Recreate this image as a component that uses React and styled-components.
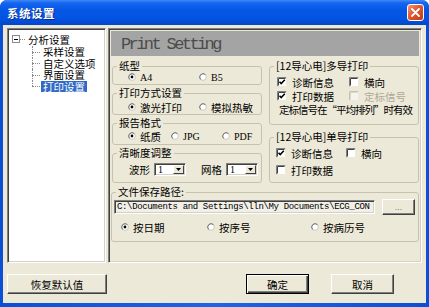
import React from 'react';
import styled, { createGlobalStyle } from 'styled-components';

const GlobalStyle = createGlobalStyle`
  html, body {
    margin: 0;
    padding: 0;
  }
  body {
    width: 429px;
    height: 307px;
    overflow: hidden;
    font-family: "Noto Sans CJK SC", "Liberation Sans", sans-serif;
    font-size: 10.5px;
    color: #000;
  }
`;

const Window = styled.div`
  width: 429px;
  height: 307px;
  display: flex;
  flex-direction: column;
  background: linear-gradient(to right, #0a4fd6, #1f63e6 50%, #0a4fd6);
  border-radius: 7px 7px 0 0;
  overflow: hidden;
`;

const TitleBar = styled.div`
  height: 25px;
  flex: none;
  display: flex;
  align-items: center;
  justify-content: space-between;
  padding: 0 5px 0 7px;
  background: linear-gradient(to bottom, #3d8af7 0%, #1665ef 12%, #0457e6 40%, #0453e2 75%, #0346c8 100%);
`;

const Title = styled.span`
  color: #fff;
  font-weight: bold;
  font-size: 11.5px;
  letter-spacing: 0.5px;
  text-shadow: 1px 1px 0 #0a2a8a;
`;

const CloseButton = styled.div`
  width: 17px;
  height: 17px;
  box-sizing: border-box;
  border: 1px solid #fff;
  border-radius: 3px;
  background: linear-gradient(135deg, #f0987a 0%, #e0582e 45%, #c23d14 100%);
  display: flex;
  align-items: center;
  justify-content: center;
`;

const Body = styled.div`
  flex: 1;
  margin: 0 3px 4px;
  padding: 3px 4px 0;
  background: #ece9d8;
  display: flex;
  flex-direction: column;
`;

const Main = styled.div`
  height: 235px;
  display: flex;
  gap: 2px;
`;

const Sunken = styled.div`
  box-sizing: border-box;
  border: 1px solid;
  border-color: #808080 #fff #fff #808080;
  box-shadow: inset 1px 1px 0 #404040, inset -1px -1px 0 #d4d0c8;
`;

const Tree = styled(Sunken)`
  width: 99px;
  background: #fff;
  padding: 3px 0 0 4px;
`;

const RootRow = styled.div`
  height: 14px;
  display: flex;
  align-items: center;
`;

const Expander = styled.span`
  width: 8px;
  height: 8px;
  box-sizing: border-box;
  border: 1px solid #8a8a8a;
  display: flex;
  align-items: center;
  justify-content: center;
  &::after {
    content: "";
    width: 4px;
    height: 1px;
    background: #000;
  }
`;

const Dash = styled.span`
  width: 5px;
  border-top: 1px dotted #8a8a8a;
  margin-right: 1px;
`;

const ChildRow = styled.div`
  position: relative;
  height: 11.5px;
  margin-left: 20px;
  padding-left: 9px;
  display: flex;
  align-items: center;
  &::before {
    content: "";
    position: absolute;
    left: 0;
    top: 0;
    bottom: ${p => (p.$last ? '50%' : '0')};
    border-left: 1px dotted #8a8a8a;
  }
  &::after {
    content: "";
    position: absolute;
    left: 0;
    top: 50%;
    width: 8px;
    border-top: 1px dotted #8a8a8a;
  }
`;

const TreeLabel = styled.span`
  display: block;
  height: 11px;
  padding: 0 2px;
  font-size: 10.5px;
  line-height: 11px;
  background: ${p => (p.$selected ? '#316ac5' : 'transparent')};
  color: ${p => (p.$selected ? '#fff' : '#000')};
`;

const Panel = styled(Sunken)`
  flex: 1;
  padding: 2px;
  display: flex;
  flex-direction: column;
`;

const Header = styled.div`
  height: 25px;
  flex: none;
  box-sizing: border-box;
  padding: 2px 0 0 10px;
  background: #a4a4a4;
  color: #4c4c4c;
  font-family: "Liberation Mono", monospace;
  font-size: 17px;
  line-height: 23px;
  letter-spacing: -2.6px;
`;

const Columns = styled.div`
  margin-top: 4px;
  padding-left: 1px;
  display: grid;
  grid-template-columns: 150px 150px;
  column-gap: 7px;
  row-gap: 3px;
`;

const Column = styled.div`
  display: flex;
  flex-direction: column;
  gap: ${p => p.$gap}px;
`;

const Group = styled.fieldset`
  margin: 0;
  min-width: 0;
  padding: 0 0 ${p => p.$pb || 0}px;
  border: 1px solid #c5c2b0;
  border-radius: 3px;
  ${p => p.$wide && 'grid-column: 1 / -1; margin-left: -1px;'}
`;

const Legend = styled.legend`
  margin-left: 4px;
  padding: 0 2px;
  line-height: 12px;
`;

const Row = styled.div`
  height: ${p => p.$h || 12}px;
  margin-top: ${p => p.$mt || 0}px;
  padding-left: ${p => p.$pl || 0}px;
  display: flex;
  align-items: center;
  white-space: nowrap;
`;

const Option = styled.span`
  display: inline-flex;
  align-items: center;
  width: ${p => (p.$w ? `${p.$w}px` : 'auto')};
  color: ${p => (p.$disabled ? '#aca899' : '#000')};
`;

const Mark = styled.svg`
  flex: none;
  margin-right: ${p => p.$gap || 4}px;
`;

const Latin = styled.span`
  font-family: "Liberation Serif", serif;
  font-size: 10px;
`;

const Note = styled(Row)`
  padding-left: 9px;
  letter-spacing: -1px;
`;

const Field = styled.span`
  display: inline-flex;
  align-items: center;
  margin-right: ${p => p.$mr || 0}px;
  gap: 4px;
`;

const Select = styled(Sunken)`
  width: 32px;
  height: 13px;
  background: #fff;
  display: flex;
  align-items: center;
  justify-content: space-between;
  padding: 0 1px 0 3px;
  font-family: "Liberation Serif", serif;
  font-size: 10px;
`;

const ArrowButton = styled.span`
  width: 11px;
  height: 9px;
  box-sizing: border-box;
  background: #ece9d8;
  border: 1px solid;
  border-color: #fff #404040 #404040 #fff;
  display: flex;
  align-items: center;
  justify-content: center;
`;

const PathRow = styled.div`
  margin-top: 1px;
  padding: 0 3px 0 2px;
  display: flex;
  align-items: center;
  justify-content: space-between;
`;

const PathBox = styled(Sunken)`
  width: 261px;
  height: 14px;
  padding-left: 2px;
  background: #f1efe6;
  overflow: hidden;
  white-space: nowrap;
  font-family: "Liberation Mono", monospace;
  font-size: 9px;
  letter-spacing: -0.35px;
  line-height: 12px;
`;

const Button = styled.button`
  width: ${p => p.$w}px;
  height: ${p => p.$h || 20}px;
  padding: 0;
  box-sizing: border-box;
  font: inherit;
  color: #000;
  background: #ece9d8;
  border: 1px solid;
  border-color: ${p => (p.$default ? '#000' : '#fff #404040 #404040 #fff')};
  box-shadow: ${p =>
    p.$default
      ? 'inset 1px 1px 0 #fff, inset -1px -1px 0 #404040, inset -2px -2px 0 #808080'
      : 'inset -1px -1px 0 #808080'};
`;

const Dots = styled(Button)`
  color: #7a7a7a;
  font-family: "Liberation Sans", sans-serif;
  font-size: 9px;
  line-height: 10px;
`;

const ButtonRow = styled.div`
  margin-top: 11px;
  padding-right: 28px;
  display: flex;
  justify-content: space-between;
`;

const Actions = styled.div`
  display: flex;
  gap: 22px;
`;

const Radio = ({ checked }) => (
  <Mark width="8" height="8" viewBox="0 0 8 8">
    <circle cx="4" cy="4" r="3.4" fill="#fff" stroke="#c9c7bd" strokeWidth="1" />
    <path d="M1.6 6.4 A3.4 3.4 0 0 1 6.4 1.6" fill="none" stroke="#707070" strokeWidth="1" />
    {checked && <circle cx="4" cy="4" r="1.4" fill="#000" />}
  </Mark>
);

const Check = ({ checked, disabled }) => (
  <Mark width="10" height="10" viewBox="0 0 10 10" $gap={5}>
    <rect x="0" y="0" width="10" height="10" fill={disabled ? '#f4f3ee' : '#fff'} />
    <path d="M0.5 9.5 V0.5 H9.5" fill="none" stroke={disabled ? '#c5c2b2' : '#808080'} />
    <path d="M1.5 8.5 V1.5 H8.5" fill="none" stroke={disabled ? '#d8d6cc' : '#404040'} />
    <path d="M9.5 0.5 V9.5 H0.5" fill="none" stroke="#ece9d8" />
    {checked && (
      <path d="M2.5 4.8 L4.2 6.6 L7.8 2.8" fill="none" stroke="#000" strokeWidth="1.6" />
    )}
  </Mark>
);

const Dropdown = ({ value }) => (
  <Select>
    <span>{value}</span>
    <ArrowButton>
      <svg width="5" height="3" viewBox="0 0 5 3">
        <path d="M0 0 H5 L2.5 3 Z" fill="#000" />
      </svg>
    </ArrowButton>
  </Select>
);

const treeItems = ['采样设置', '自定义选项', '界面设置', '打印设置'];

export default function App() {
  return (
    <>
      <GlobalStyle />
      <Window>
        <TitleBar>
          <Title>系统设置</Title>
          <CloseButton>
            <svg width="9" height="9" viewBox="0 0 9 9">
              <path d="M1 1 L8 8 M8 1 L1 8" stroke="#fff" strokeWidth="1.8" strokeLinecap="round" />
            </svg>
          </CloseButton>
        </TitleBar>
        <Body>
          <Main>
            <Tree>
              <RootRow>
                <Expander />
                <Dash />
                <TreeLabel>分析设置</TreeLabel>
              </RootRow>
              {treeItems.map((item, i) => (
                <ChildRow key={item} $last={i === treeItems.length - 1}>
                  <TreeLabel $selected={item === '打印设置'}>{item}</TreeLabel>
                </ChildRow>
              ))}
            </Tree>
            <Panel>
              <Header>Print Setting</Header>
              <Columns>
                <Column $gap={2}>
                  <Group $pb={2}>
                    <Legend>纸型</Legend>
                    <Row $h={10} $pl={15}>
                      <Option $w={71}><Radio checked /><Latin>A4</Latin></Option>
                      <Option><Radio /><Latin>B5</Latin></Option>
                    </Row>
                  </Group>
                  <Group $pb={1}>
                    <Legend>打印方式设置</Legend>
                    <Row $mt={2} $pl={15}>
                      <Option $w={71}><Radio checked />激光打印</Option>
                      <Option><Radio />模拟热敏</Option>
                    </Row>
                  </Group>
                  <Group $pb={2}>
                    <Legend>报告格式</Legend>
                    <Row $mt={1} $pl={15}>
                      <Option $w={43}><Radio checked />纸质</Option>
                      <Option $w={51}><Radio /><Latin>JPG</Latin></Option>
                      <Option><Radio /><Latin>PDF</Latin></Option>
                    </Row>
                  </Group>
                  <Group $pb={6}>
                    <Legend>清晰度调整</Legend>
                    <Row $h={14} $mt={3} $pl={16}>
                      <Field $mr={15}>波形<Dropdown value="1" /></Field>
                      <Field>网格<Dropdown value="1" /></Field>
                    </Row>
                  </Group>
                </Column>
                <Column $gap={6}>
                  <Group $pb={8}>
                    <Legend>[12导心电]多导打印</Legend>
                    <Row $h={14} $mt={3} $pl={7}>
                      <Option $w={72}><Check checked />诊断信息</Option>
                      <Option><Check />横向</Option>
                    </Row>
                    <Row $h={14} $pl={7}>
                      <Option $w={72}><Check checked />打印数据</Option>
                      <Option $disabled><Check disabled />定标信号</Option>
                    </Row>
                    <Note $h={13}>定标信号在“平均排列”时有效</Note>
                  </Group>
                  <Group $pb={5}>
                    <Legend>[12导心电]单导打印</Legend>
                    <Row $h={14} $mt={3} $pl={6}>
                      <Option $w={70}><Check checked />诊断信息</Option>
                      <Option><Check />横向</Option>
                    </Row>
                    <Row $h={14} $mt={3} $pl={6}>
                      <Option><Check />打印数据</Option>
                    </Row>
                  </Group>
                </Column>
                <Group $wide $pb={8}>
                  <Legend>文件保存路径:</Legend>
                  <PathRow>
                    <PathBox>C:\Documents and Settings\lln\My Documents\ECG_CON</PathBox>
                    <Dots $w={33} $h={16}>...</Dots>
                  </PathRow>
                  <Row $mt={6} $pl={9}>
                    <Option $w={86}><Radio checked />按日期</Option>
                    <Option $w={104}><Radio />按序号</Option>
                    <Option><Radio />按病历号</Option>
                  </Row>
                </Group>
              </Columns>
            </Panel>
          </Main>
          <ButtonRow>
            <Button $w={100}>恢复默认值</Button>
            <Actions>
              <Button $w={63} $default>确定</Button>
              <Button $w={63}>取消</Button>
            </Actions>
          </ButtonRow>
        </Body>
      </Window>
    </>
  );
}
